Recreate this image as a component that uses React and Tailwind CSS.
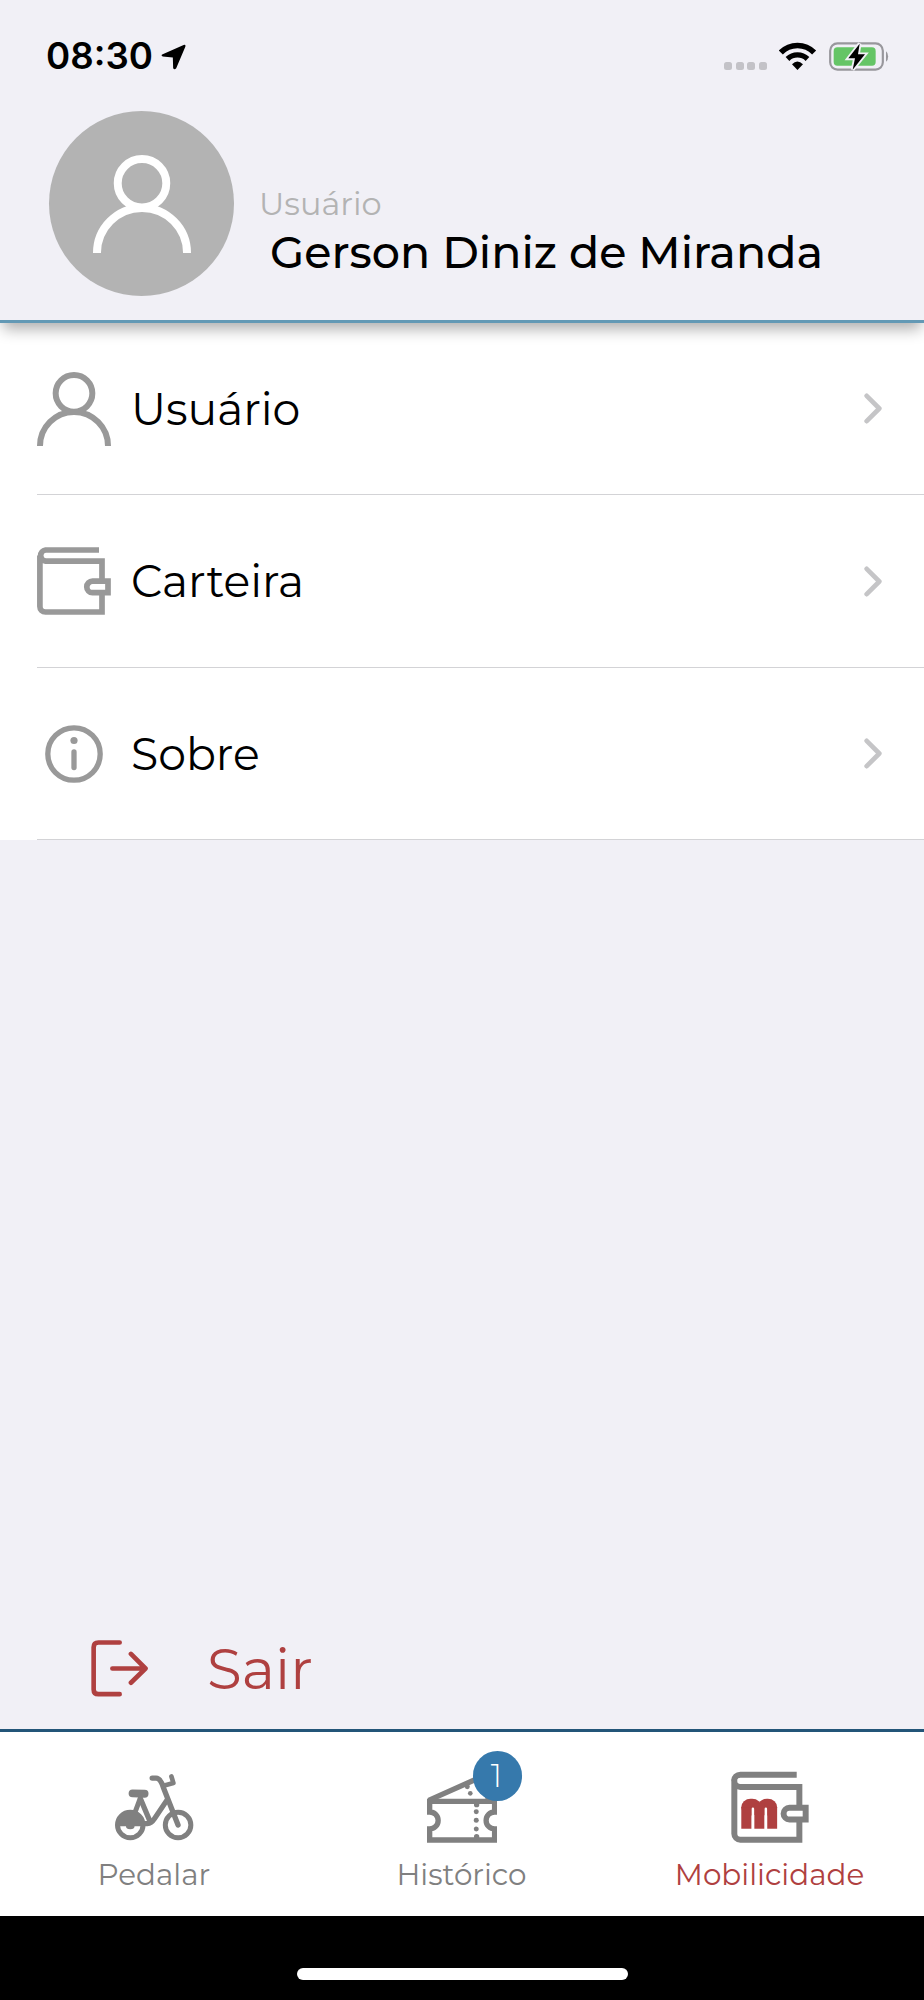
const PersonIcon = ({ className }) => (
  <svg viewBox="0 0 222 222" className={className} fill="none" stroke="currentColor" strokeWidth="18">
    <circle cx="111" cy="64" r="55" />
    <path d="M9 222a102 102 0 0 1 204 0" />
  </svg>
);

const WalletIcon = ({ className }) => (
  <svg viewBox="0 0 74 68" className={className} fill="none" stroke="currentColor" strokeWidth="5.7">
    <path d="M62 3H8.500a5.600 5.600 0 0 0 0 11.100H65V65H8.500a5.600 5.600 0 0 1-5.600-5.600V8.500" />
    <path d="M71 34.200H55.500a5.700 5.700 0 0 0 0 11.400H71z" fill="#fff" />
  </svg>
);

const InfoIcon = ({ className }) => (
  <svg viewBox="0 0 58 58" className={className} fill="none" stroke="currentColor" strokeWidth="5.3">
    <circle cx="29" cy="29" r="26.2" />
    <path d="M29 27v15.500" strokeLinecap="round" />
    <circle cx="29" cy="15.500" r="3.600" fill="currentColor" stroke="none" />
  </svg>
);

const ChevronIcon = () => (
  <svg viewBox="0 0 54 92" className="w-[18px] h-[31px] text-[#c5c5c7]" fill="none" stroke="currentColor" strokeWidth="14" strokeLinecap="round" strokeLinejoin="round">
    <path d="M8 8l38 38-38 38" />
  </svg>
);

const ExitIcon = () => (
  <svg viewBox="93 120 171 172" className="w-[57px] h-[57px]" fill="none" stroke="currentColor" strokeWidth="14" strokeLinecap="round" strokeLinejoin="round">
    <path d="M179 127.500H115q-14.500 0-14.500 14.500V269q0 14.500 14.500 14.500H179" />
    <path d="M157 206H256M213 162l44 44-44 43" />
  </svg>
);

const BikeIcon = () => (
  <svg viewBox="105 160 238 204" className="w-[79px] h-[68px]" fill="none" stroke="currentColor" strokeWidth="15" strokeLinecap="round" strokeLinejoin="round">
    <circle cx="151" cy="316" r="38.500" />
    <path d="M112 320a39 42 0 0 1 78 0H164a13 9 0 0 1-26 0z" fill="currentColor" stroke="none" />
    <circle cx="295" cy="316" r="38.500" />
    <path d="M158 221L194 222" strokeWidth="24" />
    <path d="M181 236L167 274" strokeWidth="15" />
    <path d="M182 238L209 302" strokeWidth="16" />
    <path d="M190 312H202Q215 311 224 297L263 239" strokeWidth="16" />
    <path d="M295 316L251 204Q242 175 229 175H217" strokeWidth="16" />
    <path d="M251 198L281 190 275 170" strokeWidth="14" />
  </svg>
);

const TicketIcon = () => (
  <svg viewBox="141 153 212 216" className="w-[70.600px] h-[72px]" fill="none" stroke="currentColor" strokeWidth="16">
    <path d="M149 244H344V276A25.500 25.500 0 0 0 344 327V360H149V327A25.500 25.500 0 0 0 149 276z" />
    <path d="M146 241L305 170L326 240" />
    <g fill="currentColor" stroke="none">
      <circle cx="262" cy="200" r="7.500" />
      <circle cx="271" cy="220" r="7" />
      <circle cx="290" cy="254" r="8" />
      <circle cx="289" cy="275" r="7.500" />
      <circle cx="289" cy="301" r="7.500" />
      <circle cx="289" cy="327" r="7.500" />
      <circle cx="290" cy="350" r="8" />
    </g>
  </svg>
);

const MobilicidadeIcon = () => (
  <svg viewBox="242 153 235 217" className="w-[78px] h-[72px]" fill="none" stroke="#808080" strokeWidth="18">
    <path d="M440 164H270a18 18 0 0 0 0 37H448V360H270a18 18 0 0 1-18-18V182" />
    <path d="M467 264H418a17.500 17.500 0 0 0 0 35H467z" fill="#fff" />
    <g stroke="none" fill="#af4040">
      <rect x="273" y="237" width="61" height="50" rx="28" />
      <rect x="322" y="237" width="59" height="50" rx="28" />
      <rect x="273" y="262" width="31" height="65" />
      <rect x="312" y="250" width="31" height="77" />
      <rect x="351" y="262" width="30" height="65" />
    </g>
    <path d="M308 332V267M347 332V267" stroke="#fff" strokeWidth="7.500" strokeLinecap="round" />
  </svg>
);

const menuItems = [
  { label: 'Usuário', icon: <PersonIcon className="w-[74px] h-[74px]" /> },
  { label: 'Carteira', icon: <WalletIcon className="w-[74px] h-[68px]" /> },
  { label: 'Sobre', icon: <InfoIcon className="w-[58px] h-[58px] mt-px" /> },
];

const StatusBar = () => (
  <div className="flex items-start justify-between h-[111px] pt-[38px] pl-[46px] pr-[34px]">
    <div className="flex items-start">
      <span className="font-['Inter'] text-[36.700px] leading-none font-semibold">08:30</span>
      <svg viewBox="482 131 74 77" className="w-[25px] h-[26px] mt-[6px] ml-[8px]">
        <path d="M487 161L549 134Q556 132 554 139L527 203Q522 209 518 203L517 171 487 168Q480 164 487 161z" />
      </svg>
    </div>
    <div className="flex items-start pt-[4px]">
      <div className="flex gap-[3.500px] mt-[20px] mr-[12.500px]">
        {[0, 1, 2, 3].map((i) => (
          <span key={i} className="w-2 h-2 rounded-[2.500px] bg-[#c3c2c7]" />
        ))}
      </div>
      <svg viewBox="237 67 112 84" className="w-[37.300px] h-7 mr-[12.500px]" fill="none" stroke="#000">
        <path d="M242.500 98.500A70 70 0 0 1 342.500 98.500" strokeWidth="17" />
        <path d="M262.500 118A43 43 0 0 1 322.500 118" strokeWidth="16" />
        <path d="M276 134Q292 117 309 134L292.500 151z" fill="#000" stroke="none" />
      </svg>
      <svg viewBox="385 67 183 87" className="w-[61px] h-[29px]">
        <rect x="388.500" y="71" width="158" height="79" rx="22" fill="none" stroke="#98979c" strokeWidth="6.500" />
        <rect x="399" y="83" width="126" height="55" rx="11" fill="#65c566" />
        <path d="M556 95a11 17 0 0 1 0 31z" fill="#98979c" />
        <path d="M477 72L443 116H463L456 150 493 104H472z" fill="#000" stroke="#f1f0f6" strokeWidth="11" paintOrder="stroke" />
      </svg>
    </div>
  </div>
);

const Header = () => (
  <header className="relative z-10 h-[323px] bg-[#f1f0f6] border-b-[3px] border-[#6399b5] shadow-[0_9px_14px_-3px_rgba(0,0,0,0.32)]">
    <StatusBar />
    <div className="flex pl-[49px]">
      <div className="flex items-center justify-center w-[185px] h-[185px] rounded-full bg-[#b3b3b3] text-white">
        <PersonIcon className="w-[98px] h-[98px]" />
      </div>
      <div className="pt-[77px] pl-[25px]">
        <p className="text-[32px] leading-none text-[#b3b3b3]">Usuário</p>
        <h1 className="mt-[9.500px] ml-[11px] text-[44.400px] leading-none font-medium whitespace-nowrap">Gerson Diniz de Miranda</h1>
      </div>
    </div>
  </header>
);

const Menu = () => (
  <ul className="bg-white pl-[37px]">
    {menuItems.map((item) => (
      <li key={item.label} className="flex items-center h-[172.400px] pr-[42px] border-b border-[#d3d3d6]">
        <span className="flex justify-center w-[74px] text-[#999]">{item.icon}</span>
        <span className="flex-1 pl-[20px] pt-px text-[44.200px] leading-none">{item.label}</span>
        <ChevronIcon />
      </li>
    ))}
  </ul>
);

const TabBar = () => (
  <nav className="grid grid-cols-3 h-[187px] bg-white border-t-[3px] border-[#235578] text-[#808080] text-[29.400px] leading-none">
    <div className="flex flex-col items-center pt-[41px]">
      <div className="h-[72px]"><BikeIcon /></div>
      <span className="mt-[15px]">Pedalar</span>
    </div>
    <div className="flex flex-col items-center pt-[39px]">
      <div className="relative h-[72px]">
        <TicketIcon />
        <span className="absolute left-[46px] -top-[20px] flex items-center justify-center w-[49.500px] h-[49.500px] pr-[2px] rounded-full bg-[#3679ac] text-white text-[32px] font-light">1</span>
      </div>
      <span className="mt-[17px] -ml-px">Histórico</span>
    </div>
    <div className="flex flex-col items-center pt-[39px]">
      <div className="h-[72px]"><MobilicidadeIcon /></div>
      <span className="mt-[17px] -ml-px text-[#af4040]">Mobilicidade</span>
    </div>
  </nav>
);

export default function App() {
  return (
    <div className="flex flex-col w-[924px] h-[2000px] overflow-hidden bg-[#f1f0f6] text-black font-['Montserrat','Inter',sans-serif]">
      <Header />
      <Menu />
      <main className="flex-1 flex items-end pl-[91px] pb-[32px] text-[#af4040]">
        <button className="flex items-end gap-[59px]">
          <ExitIcon />
          <span className="text-[56.500px] leading-none">Sair</span>
        </button>
      </main>
      <TabBar />
      <footer className="flex justify-center h-[84px] pt-[52px] bg-black">
        <div className="w-[331px] h-3 rounded-full bg-white" />
      </footer>
    </div>
  );
}
